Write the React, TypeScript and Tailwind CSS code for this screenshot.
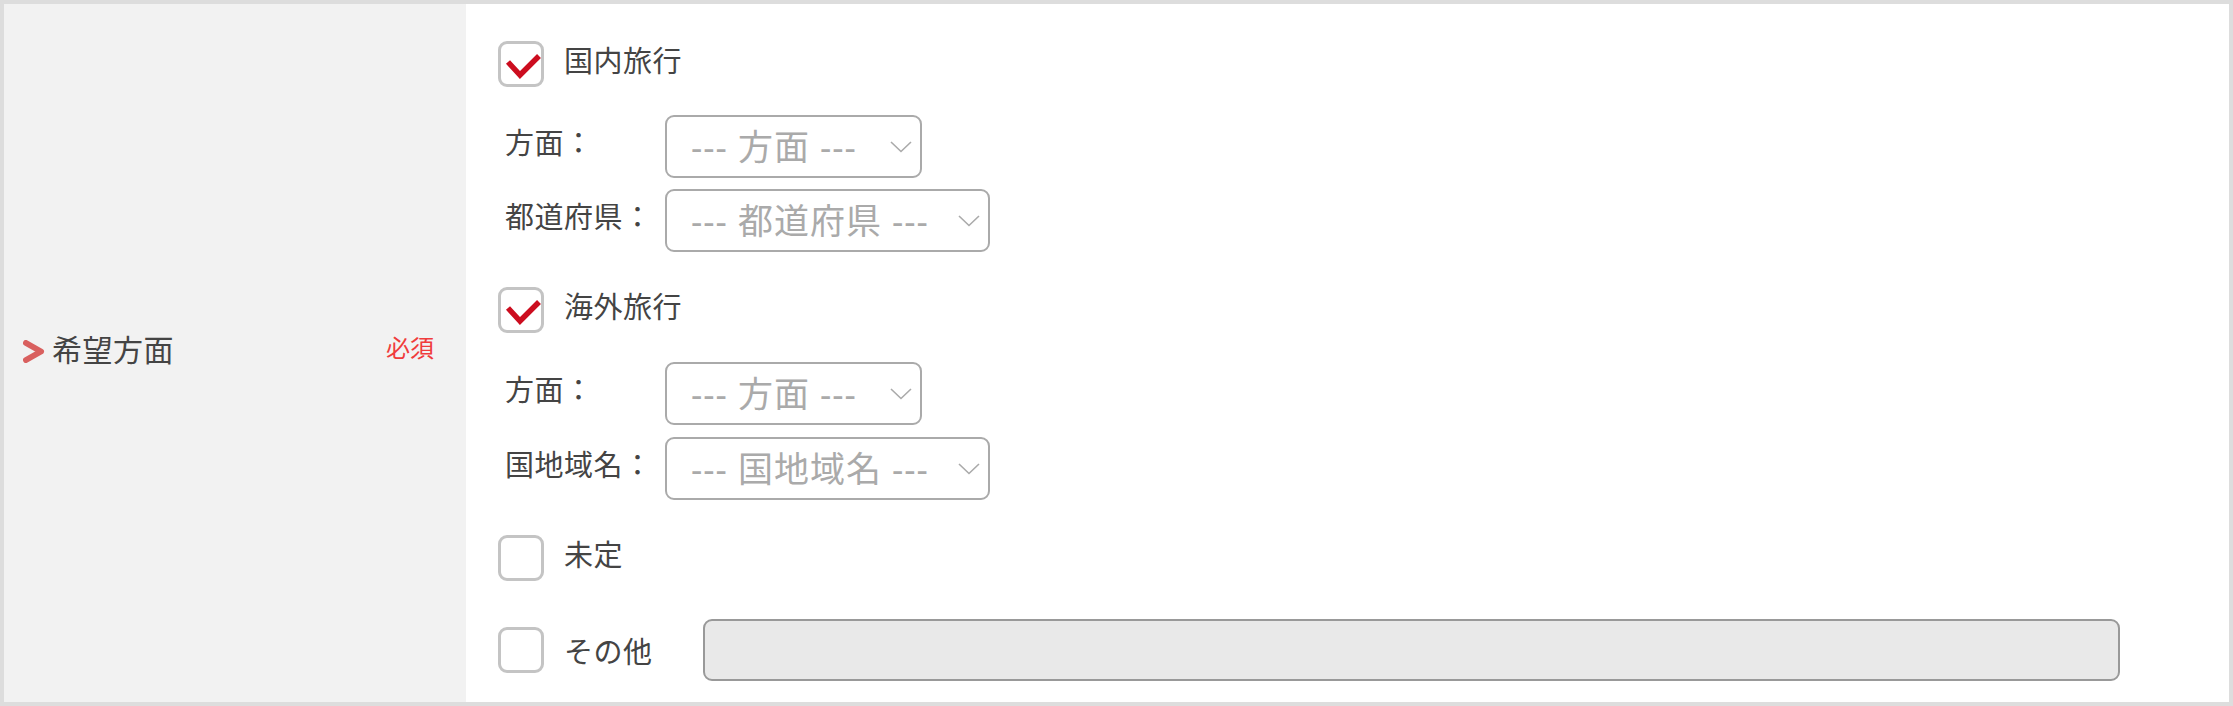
import { ReactNode } from "react";

function CheckBox({ checked }: { checked: boolean }) {
	return (
		<div className="w-[46px] h-[46px] shrink-0 rounded-[9px] border-[3px] border-[#c4c4c4] bg-white">
			{checked && (
				<svg viewBox="0 0 40 40" className="w-full h-full">
					<path d="M7 18 L19 31 L38 12" fill="none" stroke="#cc0d1f" strokeWidth="5.5" strokeLinejoin="miter" />
				</svg>
			)}
		</div>
	);
}

function CheckRow({ label, checked, className, children }: { label: string; checked: boolean; className?: string; children?: ReactNode }) {
	return (
		<div className={`flex items-center ${className ?? ""}`}>
			<CheckBox checked={checked} />
			<span className="ml-[20px] text-[29px] tracking-[0.5px] leading-none text-[#444] -mt-[10px]">{label}</span>
			{children}
		</div>
	);
}

function SelectRow({ label, placeholder, width, className }: { label: string; placeholder: string; width: string; className?: string }) {
	return (
		<div className={`flex items-center ${className ?? ""}`}>
			<div className="w-[167px] pl-[7px] text-[29px] tracking-[0.5px] leading-none text-[#444] -mt-[10px]">{label}</div>
			<div className={`${width} h-[63px] rounded-[9px] border-2 border-[#aaaaaa] flex items-center justify-between pl-[24px] pr-[8px]`}>
				<span className="text-[35px] tracking-[1px] leading-none text-[#aaaaaa] whitespace-nowrap font-['Noto_Sans','Noto_Sans_CJK_JP',sans-serif]">{placeholder}</span>
				<svg viewBox="0 0 22 12" className="w-[22px] h-[12px]">
					<path d="M1 1 L11 10.5 L21 1" fill="none" stroke="#aaaaaa" strokeWidth="1.6" />
				</svg>
			</div>
		</div>
	);
}

export default function App() {
	return (
		<div className="w-[2233px] h-[706px] border-4 border-[#dddddd] flex bg-white font-['Noto_Sans_CJK_JP','Noto_Sans',sans-serif]">
			{/* Label column */}
			<div className="w-[462px] shrink-0 bg-[#f2f2f2] flex items-center pl-[19px] pr-[32px]">
				<svg viewBox="0 0 22 23" className="w-[22px] h-[23px] shrink-0 -mt-[4px]">
					<path d="M3 3 L18 11.5 L3 20" fill="none" stroke="#d9605f" strokeWidth="6" strokeLinejoin="round" strokeLinecap="round" />
				</svg>
				<span className="ml-[7px] text-[30px] tracking-[0.5px] leading-none text-[#444] -mt-[10px]">希望方面</span>
				<span className="ml-auto text-[24px] leading-none text-[#f03c3c] -mt-[12px]">必須</span>
			</div>

			{/* Options */}
			<div className="flex-1 pl-[32px] pt-[37px]">
				<CheckRow label="国内旅行" checked={true} />
				<SelectRow label="方面：" placeholder="--- 方面 ---" width="w-[257px]" className="mt-[28px]" />
				<SelectRow label="都道府県：" placeholder="--- 都道府県 ---" width="w-[325px]" className="mt-[11px]" />

				<CheckRow label="海外旅行" checked={true} className="mt-[35px]" />
				<SelectRow label="方面：" placeholder="--- 方面 ---" width="w-[257px]" className="mt-[29px]" />
				<SelectRow label="国地域名：" placeholder="--- 国地域名 ---" width="w-[325px]" className="mt-[12px]" />

				<CheckRow label="未定" checked={false} className="mt-[35px]" />

				<div className="flex items-center mt-[38px]">
					<CheckBox checked={false} />
					<span className="ml-[20px] text-[29px] tracking-[0.5px] leading-none text-[#444]">その他</span>
					<input
						type="text"
						className="ml-[50px] w-[1417px] h-[62px] rounded-[9px] border-2 border-[#999999] bg-[#e9e9e9] outline-none"
					/>
				</div>
			</div>
		</div>
	);
}
